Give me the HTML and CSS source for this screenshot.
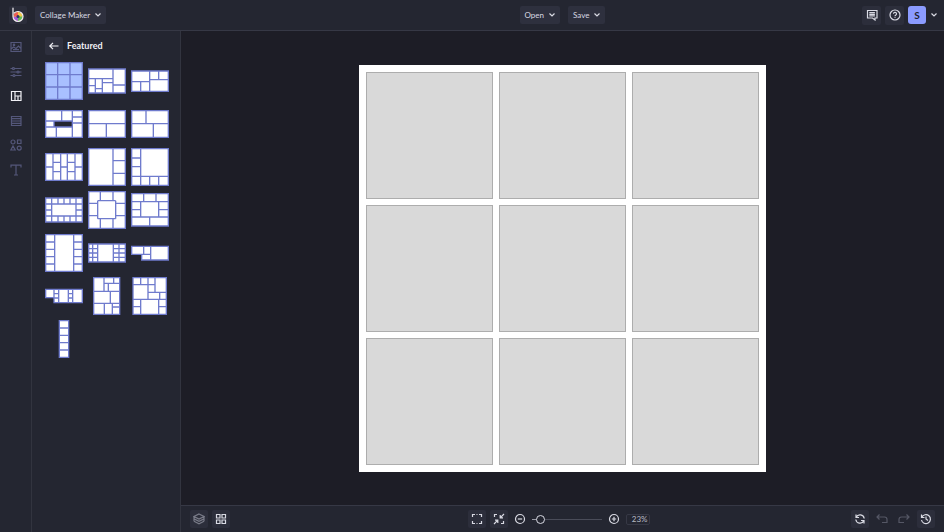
FILE: index.html
```html
<!DOCTYPE html>
<html lang="en">
<head>
    <meta charset="UTF-8">
    <meta name="viewport" content="width=device-width, initial-scale=1.0">
    <title>Collage Maker</title>
    <link rel="stylesheet" href="styles.css">
</head>
<body>
    <header class="topbar">
        <div class="topbar-left">
            <a class="logo" href="#" aria-label="Home">
                <svg viewBox="0 0 18 18" width="18" height="18">
                    <circle cx="9" cy="10.5" r="4.6" fill="#f2c94c"/>
                    <path d="M9 10.5H13.6A4.6 4.6 0 0 1 9 15.100z" fill="#62bb5b"/>
                    <path d="M9 10.5V15.100A4.6 4.6 0 0 1 4.4 10.5z" fill="#a259d9"/>
                    <path d="M9 10.5H4.4A4.6 4.6 0 0 1 9 5.900z" fill="#ef5f55"/>
                    <circle cx="9" cy="10.5" r="1.5" fill="#2b3560"/>
                    <path d="M4 2V10.5a5 5 0 1 0 5-5c-1.600 0-2.800.5-3.700 1.400" fill="none" stroke="#f4f1f4" stroke-width="1.2" stroke-linecap="round"/>
                </svg>
            </a>
            <button class="menu-btn" aria-haspopup="true">Collage Maker
                <svg class="caret" viewBox="0 0 8 8"><path d="M1.5 2.5L4 5l2.5-2.5"/></svg>
            </button>
        </div>
        <div class="topbar-main">
            <div class="topbar-center">
                <button class="menu-btn" aria-haspopup="true">Open
                    <svg class="caret" viewBox="0 0 8 8"><path d="M1.5 2.5L4 5l2.5-2.5"/></svg>
                </button>
                <button class="menu-btn" aria-haspopup="true">Save
                    <svg class="caret" viewBox="0 0 8 8"><path d="M1.5 2.5L4 5l2.5-2.5"/></svg>
                </button>
            </div>
            <div class="topbar-right">
                <button class="icon-btn" aria-label="Feedback">
                    <svg class="icon" viewBox="0 0 12 12"><path d="M1.5 1.5h9.500v7.500H9v2L6.500 9h-5zM3.300 3.700h5.600M3.300 5.300h5.600M3.300 6.900h5.600"/></svg>
                </button>
                <button class="icon-btn" aria-label="Help">
                    <svg class="icon" viewBox="0 0 12 12"><circle cx="6" cy="6" r="5"/><path d="M4.500 4.800a1.500 1.500 0 1 1 2.300 1.300c-.6.3-.8.6-.8 1.100M6 8.300v.8"/></svg>
                </button>
                <button class="avatar">S</button>
                <button class="account-btn" aria-label="Account menu">
                    <svg class="caret" viewBox="0 0 8 8"><path d="M1.5 2.5L4 5l2.5-2.5"/></svg>
                </button>
            </div>
        </div>
    </header>

    <div class="workspace">
        <nav class="rail">
            <button class="rail-btn" aria-label="Images">
                <svg class="icon" viewBox="0 0 12 12"><path d="M1 1.5h10v9H1zM1 8l2.500-2L6 7.500 8.500 5 11 7.500M3 8.700h6"/><circle cx="4" cy="3.900" r=".7"/></svg>
            </button>
            <button class="rail-btn" aria-label="Adjust">
                <svg class="icon" viewBox="0 0 12 12"><path d="M.5 2.500h2M4.500 2.500h7M.5 6h6.500M9 6h2.500M.5 9.500h2.500M5 9.500h6.500"/><circle cx="3.500" cy="2.500" r="1"/><circle cx="8" cy="6" r="1"/><circle cx="4" cy="9.500" r="1"/></svg>
            </button>
            <button class="rail-btn active" aria-label="Layouts">
                <svg class="icon" viewBox="0 0 12 12"><path d="M1.500 1.500H11v9H1.500zM5 1.500v9M5 6h6M8 6v4.500"/></svg>
            </button>
            <button class="rail-btn" aria-label="Patterns">
                <svg class="icon" viewBox="0 0 12 12"><path d="M1.500 1.500H11v9H1.500zM1.500 3.700H11M1.500 6H11M1.500 8.300H11"/></svg>
            </button>
            <button class="rail-btn" aria-label="Graphics">
                <svg class="icon" viewBox="0 0 12 12"><circle cx="3" cy="3" r="2"/><path d="M7.500 1H11v3.500H7.500zM3 7l2.200 4H.8z"/><circle cx="9.200" cy="9.100" r="2"/></svg>
            </button>
            <button class="rail-btn" aria-label="Text">
                <svg class="icon" viewBox="0 0 12 12"><path d="M1 3.500V1.200h10v2.300M6 1.200V11M4 11h4"/></svg>
            </button>
        </nav>

        <aside class="panel">
            <div class="panel-head">
                <button class="back-btn" aria-label="Back">
                    <svg class="icon" viewBox="0 0 12 12"><path d="M10.500 6H2M5 2.800L1.800 6 5 9.200"/></svg>
                </button>
                <h1 class="panel-title">Featured</h1>
            </div>
            <div class="layouts">
                <button class="layout selected" aria-label="Layout 1"><svg viewBox="0 0 114 114"><path d="M2 2h110v110H2zM38 2v110M75 2v110M2 38h110M2 75h110"/></svg></button>
                <button class="layout" aria-label="Layout 2"><svg viewBox="0 0 114 114"><path d="M2 21h110v72H2zM75 21v72M2 50h73M75 69h37M22 50v43M2 71h20M43 50v43M22 80h21M43 62h32"/></svg></button>
                <button class="layout" aria-label="Layout 3"><svg viewBox="0 0 114 114"><path d="M2 27h110v61H2zM56 27v61M2 59h54M29 59v29M56 53h56M83 27v26"/></svg></button>

                <button class="layout" aria-label="Layout 4"><svg viewBox="0 0 114 114"><path d="M2 17h110v80H2zM27 48h55v18H27zM2 48h25M2 66h25M27 48v18M50 17v31M82 17v80M82 36h30M82 54h30M34 66v31"/></svg></button>
                <button class="layout" aria-label="Layout 5"><svg viewBox="0 0 114 114"><path d="M2 17h110v80H2zM2 56h110M55 56v41"/></svg></button>
                <button class="layout" aria-label="Layout 6"><svg viewBox="0 0 114 114"><path d="M2 17h110v80H2zM2 56h110M45 17v39M67 56v41"/></svg></button>

                <button class="layout" aria-label="Layout 7"><svg viewBox="0 0 114 114"><path d="M2 17h110v80H2zM24 17v80M47 17v80M67 17v80M90 17v80M2 57h22M47 57h20M90 57h22M24 43h23M24 71h23M67 43h23M67 71h23"/></svg></button>
                <button class="layout" aria-label="Layout 8"><svg viewBox="0 0 114 114"><path d="M2 2h110v110H2zM75 2v110M75 38h37M75 76h37"/></svg></button>
                <button class="layout" aria-label="Layout 9"><svg viewBox="0 0 114 114"><path d="M2 2h110v110H2zM29 2v110M2 85h110M2 30h27M2 56h27M56 85v27M83 85v27"/></svg></button>

                <button class="layout" aria-label="Layout 10"><svg viewBox="0 0 114 114"><path d="M2 21h110v72H2zM2 39h110M2 75h110M20 21v72M93 21v72M39 21v18M57 21v18M75 21v18M39 75v18M57 75v18M75 75v18M2 57h18M93 57h19"/></svg></button>
                <button class="layout" aria-label="Layout 11"><svg viewBox="0 0 114 114"><path d="M2 2h110v110H2zM29 29h54M83 29v54M83 83H29M29 83V29M37 2v27M75 2v27M37 83v29M75 83v29M2 37h27M2 74h27M83 37h29M83 74h29"/></svg></button>
                <button class="layout" aria-label="Layout 12"><svg viewBox="0 0 114 114"><path d="M2 8h110v97H2zM2 32h110M2 78h110M38 8v24M75 8v24M29 32v46M83 32v46M2 56h27M83 56h29M56 78v27"/></svg></button>

                <button class="layout" aria-label="Layout 13"><svg viewBox="0 0 114 114"><path d="M2 2h110v110H2zM29 2v110M86 2v110M2 24h27M2 46h27M2 68h27M2 90h27M86 24h26M86 46h26M86 68h26M86 90h26"/></svg></button>
                <button class="layout" aria-label="Layout 14"><svg viewBox="0 0 114 114"><path d="M2 30h110v54H2zM14 30v54M29 30v54M76 30v54M93 30v54M2 44h27M2 57h27M2 70h27M76 44h36M76 57h36M76 70h36"/></svg></button>
                <button class="layout" aria-label="Layout 15"><svg viewBox="0 0 114 114"><path d="M2 37h110v41H32V61H2zM38 37v24M59 37v41M32 61h27"/></svg></button>

                <button class="layout" aria-label="Layout 16"><svg viewBox="0 0 114 114"><path d="M2 37h110v40H27V62H2zM27 37v40M41 37v40M70 37v40M83 37v40M27 50h14M27 63h14M70 50h13M70 63h13"/></svg></button>
                <button class="layout" aria-label="Layout 17"><svg viewBox="0 0 114 114"><path d="M17 2h78v110H17zM17 43h78M17 79h78M48 2v41M77 2v17M48 19h47M61 19v24M67 43v36M49 79v33M73 79v33M73 90h22"/></svg></button>
                <button class="layout" aria-label="Layout 18"><svg viewBox="0 0 114 114"><path d="M6 2h100v110H6zM29 2v21M51 2v65M6 23h66M72 2v44M51 46h55M86 46v21M6 67h100M29 67v45M83 67v45M6 89h23M83 89h23"/></svg></button>

                <button class="layout" aria-label="Layout 19"><svg viewBox="0 0 114 114"><path d="M43 2h28v110H43zM43 24h28M43 46h28M43 68h28M43 90h28"/></svg></button>
            </div>
        </aside>

        <div class="editor">
            <main class="stage">
                <div class="collage">
                    <div class="cell"></div>
                    <div class="cell"></div>
                    <div class="cell"></div>
                    <div class="cell"></div>
                    <div class="cell"></div>
                    <div class="cell"></div>
                    <div class="cell"></div>
                    <div class="cell"></div>
                    <div class="cell"></div>
                </div>
            </main>
            <footer class="toolbar">
                <div class="tools">
                    <button class="icon-btn dim" aria-label="Layers">
                        <svg class="icon" viewBox="0 0 12 12"><path d="M6 1l5 2.500L6 6 1 3.500zM1 5.900l5 2.500 5-2.500M1 8.300l5 2.500 5-2.500M1 3.500v4.800M11 3.500v4.800"/></svg>
                    </button>
                    <button class="icon-btn" aria-label="Grid">
                        <svg class="icon" viewBox="0 0 12 12"><path d="M1.500 1.500H5V5H1.500zM7 1.500h3.500V5H7zM1.500 7H5v3.500H1.500zM7 7h3.500v3.500H7z"/></svg>
                    </button>
                </div>
                <div class="zoom">
                    <button class="icon-btn" aria-label="Fit to screen">
                        <svg class="icon" viewBox="0 0 12 12"><path d="M1.500 4V1.500H4M8 1.500h2.500V4M10.500 8v2.500H8M4 10.500H1.500V8M5.500 1.500h1M5.500 10.500h1"/></svg>
                    </button>
                    <button class="icon-btn" aria-label="Actual size">
                        <svg class="icon" viewBox="0 0 12 12"><path d="M1.500 4V1.500H4M10.500 8v2.500H8M11 1L7.200 4.800M7.200 2v2.800H10M1 11l3.800-3.800M2 7.200h2.800V10"/></svg>
                    </button>
                    <button class="zoom-btn" aria-label="Zoom out">
                        <svg class="icon" viewBox="0 0 12 12"><circle cx="6" cy="6" r="4.500"/><path d="M3.800 6h4.400"/></svg>
                    </button>
                    <input class="zoom-range" type="range" min="0" max="100" value="8" aria-label="Zoom">
                    <button class="zoom-btn" aria-label="Zoom in">
                        <svg class="icon" viewBox="0 0 12 12"><circle cx="6" cy="6" r="4.500"/><path d="M3.800 6h4.400M6 3.800v4.400"/></svg>
                    </button>
                    <input class="zoom-value" type="text" value="23%" aria-label="Zoom level">
                </div>
                <div class="history">
                    <button class="icon-btn" aria-label="Reset">
                        <svg class="icon" viewBox="0 0 12 12"><path d="M2 1.500v3h3M2.200 4.300a4.200 4.200 0 0 1 8 1.200M10 10.500v-3H7M9.800 7.700a4.200 4.200 0 0 1-8-1.200"/></svg>
                    </button>
                    <button class="icon-btn plain" aria-label="Undo" disabled>
                        <svg class="icon" viewBox="0 0 12 12"><path d="M3.500 1.500L1 4l2.500 2.500M1 4h7.500Q11 4 11 6.500V9.500H6"/></svg>
                    </button>
                    <button class="icon-btn plain" aria-label="Redo" disabled>
                        <svg class="icon" viewBox="0 0 12 12"><path d="M8.500 1.500L11 4 8.500 6.500M11 4H3.500Q1 4 1 6.500V9.500h5"/></svg>
                    </button>
                    <button class="icon-btn" aria-label="History">
                        <svg class="icon" viewBox="0 0 12 12"><path d="M1.500 1.500v3h3M1.800 4.300A4.500 4.500 0 1 1 1.500 7M6 3.500V6l2 1.500"/></svg>
                    </button>
                </div>
            </footer>
        </div>
    </div>
</body>
</html>
```
FILE: styles.css
```css
* {
    box-sizing: border-box;
}

body {
    margin: 0;
    height: 100vh;
    display: flex;
    flex-direction: column;
    overflow: hidden;
    background-color: #242631;
    color: #d9dae3;
    font-family: Lato, "Open Sans", sans-serif;
    font-size: 8px;
}

button {
    display: flex;
    align-items: center;
    justify-content: center;
    flex-shrink: 0;
    margin: 0;
    padding: 0;
    border: none;
    background: none;
    color: inherit;
    font: inherit;
    cursor: pointer;
}

.icon {
    width: 12px;
    height: 12px;
    fill: none;
    stroke: currentColor;
    stroke-width: 1.2;
}

.caret {
    width: 8px;
    height: 8px;
    fill: none;
    stroke: currentColor;
    stroke-width: 1.2;
}

/* Top bar */
.topbar {
    display: flex;
    flex-shrink: 0;
    height: 31px;
    border-bottom: 1px solid #363845;
}

.topbar-left {
    display: flex;
    align-items: center;
    gap: 8px;
    width: 181px;
    padding-left: 9px;
}

.logo {
    display: flex;
    border-radius: 2px;
    background-color: #2c2e3b;
}

.menu-btn {
    gap: 4px;
    height: 18px;
    padding: 0 4px 0 5px;
    border-radius: 2px;
    background-color: #2e303e;
}

.topbar-main {
    flex: 1;
    display: grid;
    grid-template-columns: 1fr auto 1fr;
    align-items: center;
}

.topbar-center {
    grid-column: 2;
    display: flex;
    gap: 8px;
}

.topbar-right {
    display: flex;
    justify-content: flex-end;
    align-items: center;
    gap: 4px;
    padding-right: 6px;
}

.icon-btn {
    width: 18px;
    height: 18px;
    border-radius: 2px;
    background-color: #2c2e3b;
}

.topbar-right .icon-btn {
    width: 19px;
    height: 19px;
}

.avatar {
    width: 18px;
    height: 18px;
    border-radius: 3px;
    background-color: #8b9bff;
    color: #20222d;
    font-size: 10px;
    font-weight: bold;
}

/* Side bar */
.workspace {
    flex: 1;
    display: flex;
    min-height: 0;
}

.rail {
    display: grid;
    grid-template-rows: repeat(6, 1fr);
    align-self: stretch;
    justify-content: center;
    width: 31px;
    max-height: 151px;
    padding-top: 4px;
}

.rail-btn {
    width: 24px;
    color: #54577a;
}

.rail-btn.active {
    color: #f1f1f6;
}

.panel {
    width: 150px;
    padding: 6px 9px 6px 10px;
    border-left: 1px solid #32343f;
    border-right: 1px solid #32343f;
}

.panel-head {
    display: flex;
    align-items: center;
    gap: 4px;
    padding-left: 3px;
    margin-bottom: 4px;
}

.back-btn {
    width: 18px;
    height: 18px;
    border-radius: 2px;
    background-color: #2e303e;
    color: #f1f1f6;
}

.panel-title {
    margin: 0;
    font-size: 9px;
    line-height: 16px;
    color: #f1f1f6;
}

.layouts {
    display: grid;
    grid-template-columns: repeat(3, 1fr);
    grid-auto-rows: 43px;
}

.layout svg {
    width: 38px;
    height: 38px;
    fill: #ffffff;
    fill-rule: evenodd;
    stroke: #6f7bcd;
    stroke-width: 4;
}

.layout.selected svg {
    fill: #a9c0ff;
}

/* Canvas */
.editor {
    flex: 1;
    display: flex;
    flex-direction: column;
    min-width: 0;
}

.stage {
    flex: 1;
    display: flex;
    justify-content: center;
    min-height: 0;
    padding: 34px 20px 33px;
    background-color: #1d1d26;
}

.collage {
    display: grid;
    grid-template-columns: repeat(3, 1fr);
    grid-template-rows: repeat(3, 1fr);
    gap: 6px;
    height: 100%;
    aspect-ratio: 1;
    padding: 7px;
    background-color: #ffffff;
}

.cell {
    border: 1px solid #adadad;
    background-color: #d9d9d9;
}

/* Bottom bar */
.toolbar {
    display: grid;
    grid-template-columns: 1fr auto 1fr;
    align-items: center;
    flex-shrink: 0;
    height: 27px;
    border-top: 1px solid #363845;
}

.tools,
.zoom,
.history {
    display: flex;
    align-items: center;
    gap: 4px;
}

.tools {
    padding-left: 9px;
}

.zoom {
    padding-right: 8px;
}

.history {
    justify-content: flex-end;
    padding-right: 9px;
}

.dim {
    color: #797b88;
}

.plain {
    background: none;
    color: #555765;
}

.zoom-btn {
    width: 16px;
    height: 18px;
}

.zoom-range {
    -webkit-appearance: none;
    appearance: none;
    width: 70px;
    height: 10px;
    margin: 0;
    background: linear-gradient(to right, #9a9ba6 10%, #4a4c59 10%) center / 100% 1px no-repeat;
}

.zoom-range::-webkit-slider-thumb {
    -webkit-appearance: none;
    width: 9px;
    height: 9px;
    border: 1px solid #d9dae3;
    border-radius: 50%;
    background-color: #242631;
}

.zoom-value {
    width: 24px;
    height: 11px;
    padding: 0 1px;
    border: 1px solid #363845;
    border-radius: 2px;
    background: none;
    color: #b9bac4;
    font-family: inherit;
    font-size: 8px;
    text-align: right;
}
```
